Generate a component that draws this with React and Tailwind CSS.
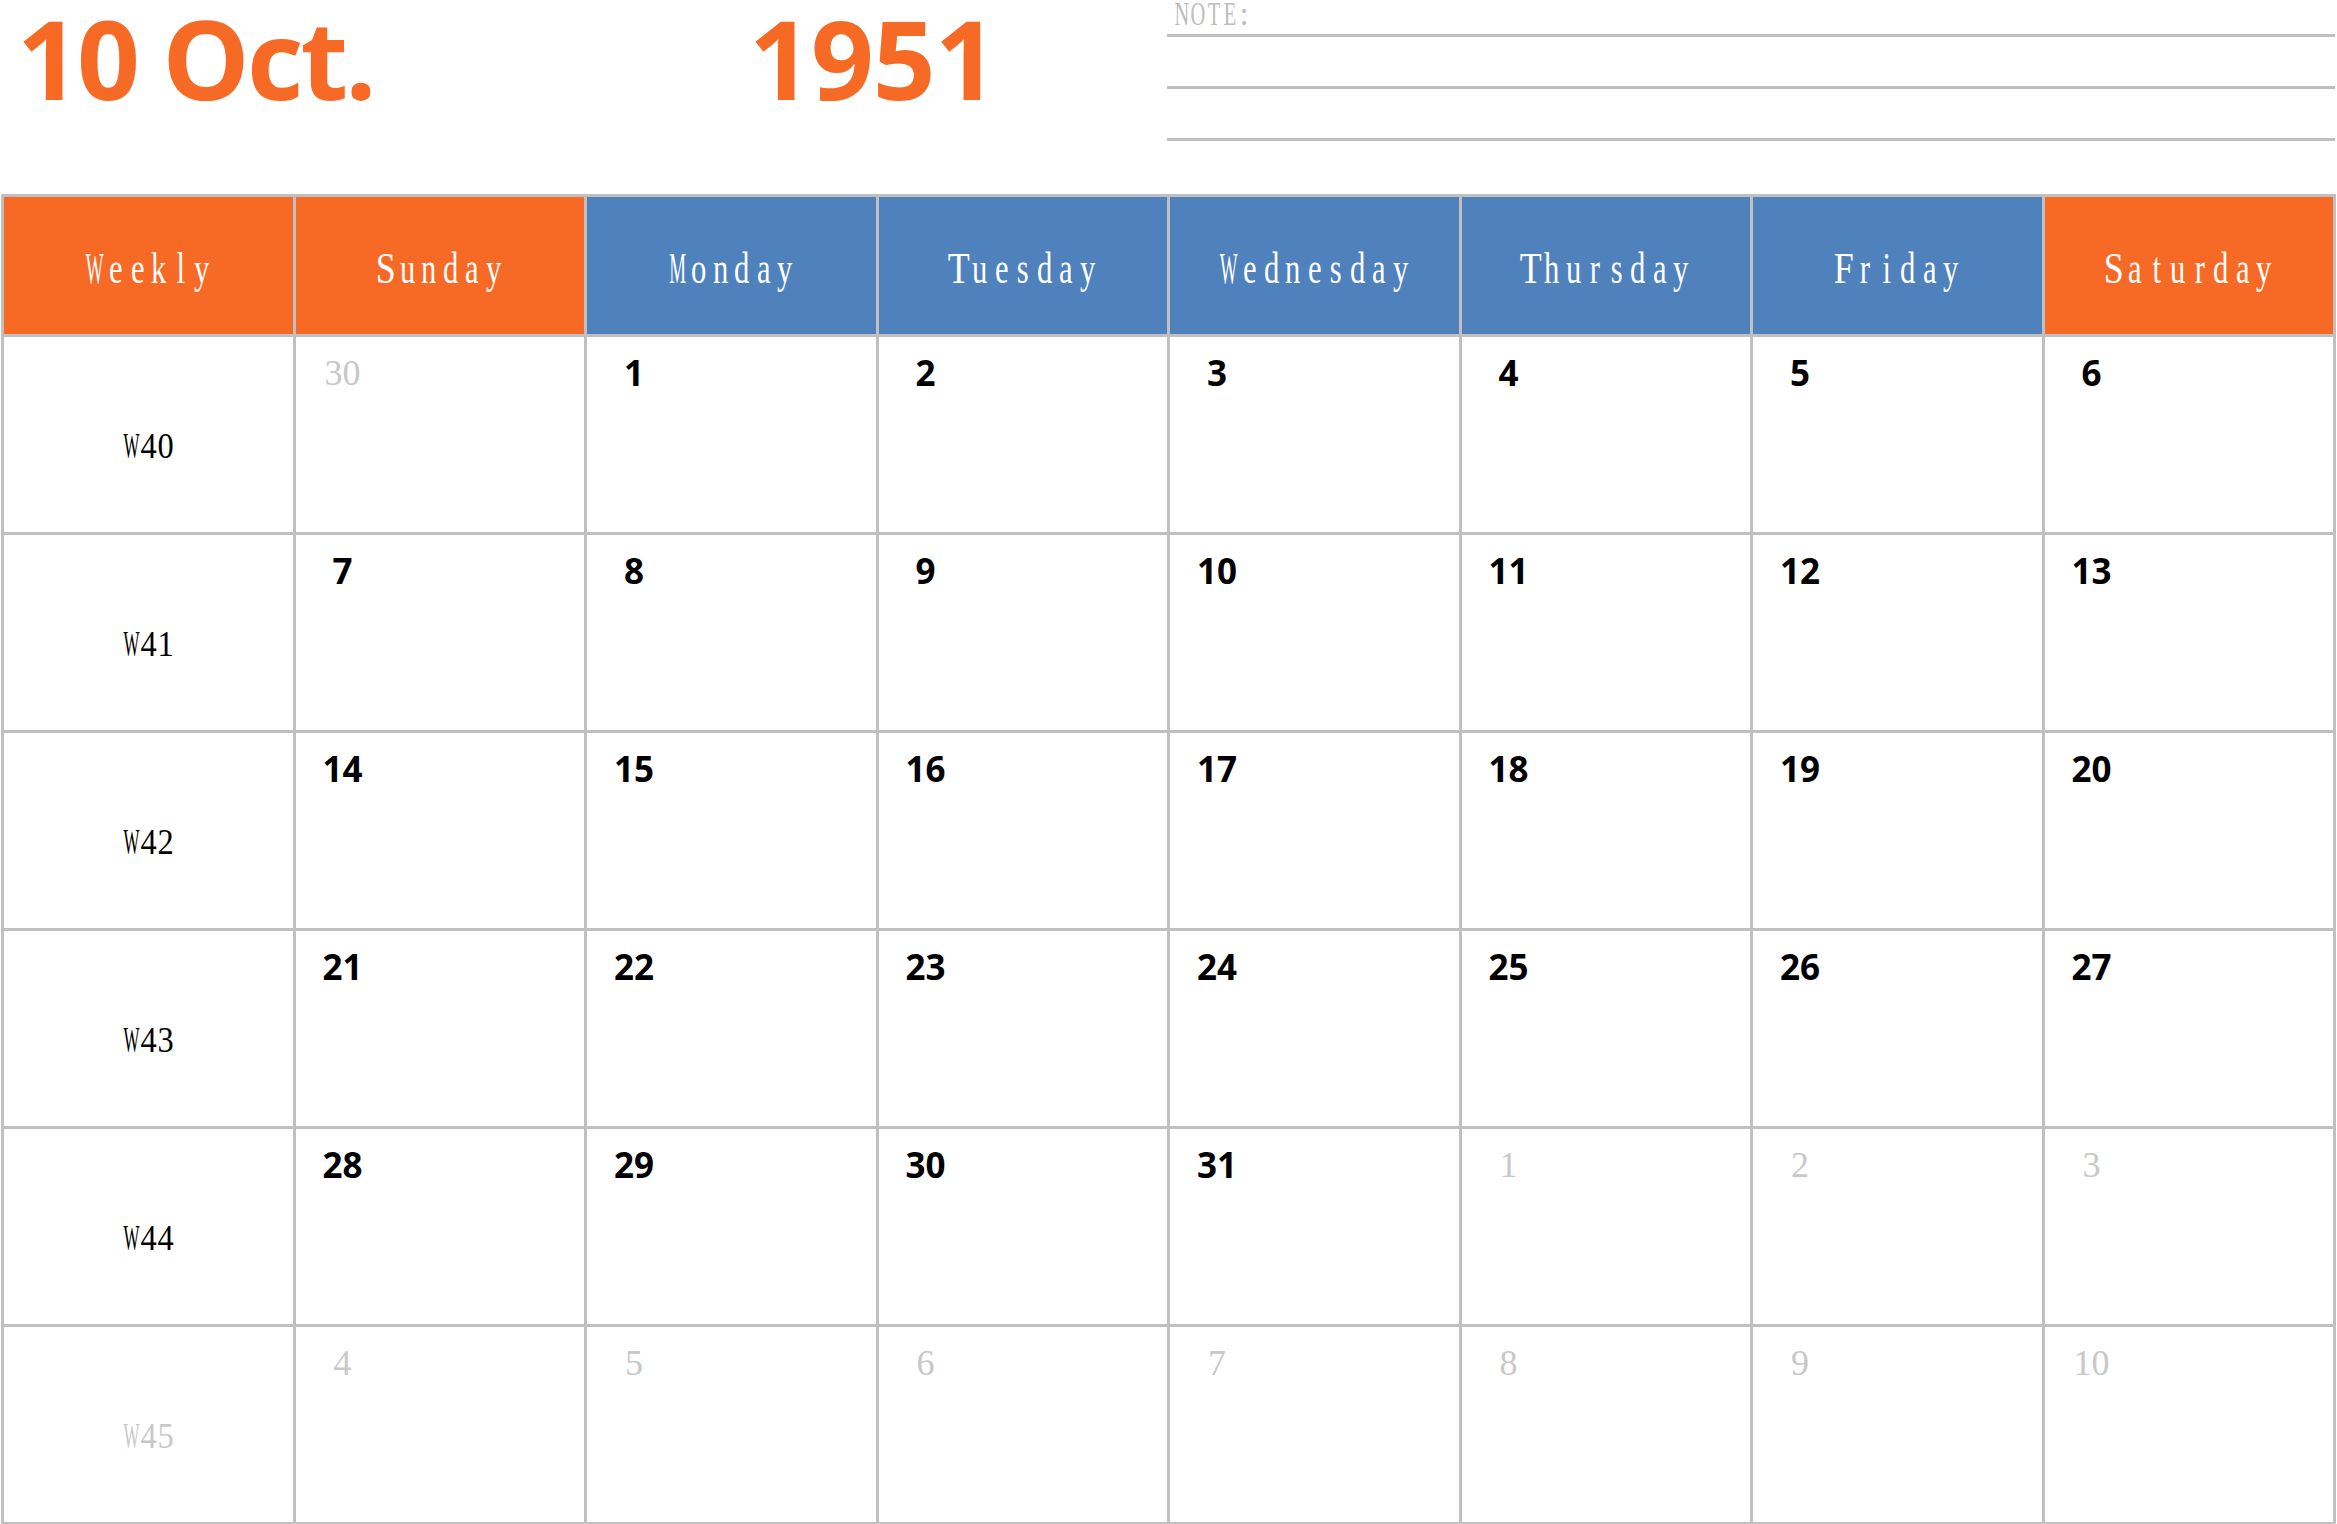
import React from "react";

const WIDE = "WMm";

function HeadText({ text }) {
  return (
    <span className="inline-flex">
      {text.split("").map((ch, i) => {
        let cls = "inline-flex justify-center w-[21.5px] scale-x-[0.68]";
        if (WIDE.includes(ch)) cls = "inline-flex justify-center w-[21.5px] scale-x-[0.42]";
        else if (ch >= "A" && ch <= "Z") cls = "inline-flex justify-center w-[21.5px] scale-x-[0.8]";
        return (
          <span key={i} className={cls}>
            {ch}
          </span>
        );
      })}
    </span>
  );
}

function WeekText({ text }) {
  return (
    <span className="inline-flex">
      {text.split("").map((ch, i) => {
        const cls = WIDE.includes(ch)
          ? "inline-flex justify-center w-[17px] scale-x-[0.47]"
          : "inline-flex justify-center w-[17px] scale-x-[0.9]";
        return (
          <span key={i} className={cls}>
            {ch}
          </span>
        );
      })}
    </span>
  );
}

function NoteText({ text }) {
  return (
    <span className="inline-flex">
      {text.split("").map((ch, i) => {
        const cls =
          ch === ":"
            ? "inline-flex justify-center w-[12px]"
            : "inline-flex justify-center w-[16px] scale-x-[0.62]";
        return (
          <span key={i} className={cls}>
            {ch}
          </span>
        );
      })}
    </span>
  );
}

const headers = [
  { t: "Weekly", c: "bg-[#F76A25]" },
  { t: "Sunday", c: "bg-[#F76A25]" },
  { t: "Monday", c: "bg-[#4F81BD]" },
  { t: "Tuesday", c: "bg-[#4F81BD]" },
  { t: "Wednesday", c: "bg-[#4F81BD]" },
  { t: "Thursday", c: "bg-[#4F81BD]" },
  { t: "Friday", c: "bg-[#4F81BD]" },
  { t: "Saturday", c: "bg-[#F76A25]" },
];

const weeks = [
  { w: "W40", cur: true, d: [[30, false], [1, true], [2, true], [3, true], [4, true], [5, true], [6, true]] },
  { w: "W41", cur: true, d: [[7, true], [8, true], [9, true], [10, true], [11, true], [12, true], [13, true]] },
  { w: "W42", cur: true, d: [[14, true], [15, true], [16, true], [17, true], [18, true], [19, true], [20, true]] },
  { w: "W43", cur: true, d: [[21, true], [22, true], [23, true], [24, true], [25, true], [26, true], [27, true]] },
  { w: "W44", cur: true, d: [[28, true], [29, true], [30, true], [31, true], [1, false], [2, false], [3, false]] },
  { w: "W45", cur: false, d: [[4, false], [5, false], [6, false], [7, false], [8, false], [9, false], [10, false]] },
];

export default function App() {
  return (
    <div className="w-[2337px] h-[1524px] bg-white overflow-hidden">
      {/* Top area */}
      <div className="h-[194px] flex">
        <div className="w-[1167px] flex items-start">
          <span className="ml-[17px] -mt-[18px] w-[732px] text-[110px] leading-[150px] tracking-[-3px] font-bold text-[#F76A25] font-['Open_Sans','Noto_Sans',sans-serif] whitespace-nowrap">
            10 Oct.
          </span>
          <span className="-mt-[18px] text-[110px] leading-[150px] tracking-[-1px] font-bold text-[#F76A25] font-['Open_Sans','Noto_Sans',sans-serif]">
            1951
          </span>
        </div>
        <div className="w-[1168px] flex flex-col">
          <div className="h-[34px] pl-[7px] text-[33px] leading-[28px] text-[#BDBDBD] font-['Liberation_Serif',serif]">
            <NoteText text="NOTE:" />
          </div>
          <div className="h-[3px] bg-[#BFBFBF]" />
          <div className="h-[49px]" />
          <div className="h-[3px] bg-[#BFBFBF]" />
          <div className="h-[49px]" />
          <div className="h-[3px] bg-[#BFBFBF]" />
        </div>
      </div>

      {/* Calendar table */}
      <div className="ml-[1px] w-[2335px] bg-[#C0C0C0] p-[3px] grid grid-cols-8 grid-rows-[137px_repeat(6,195px)] gap-[3px]">
        {headers.map((h) => (
          <div
            key={h.t}
            className={`${h.c} flex items-center justify-center pt-[5px] text-white text-[45px] leading-none font-['Liberation_Serif',serif]`}
          >
            <HeadText text={h.t} />
          </div>
        ))}
        {weeks.map((wk) => (
          <React.Fragment key={wk.w}>
            <div
              className={`bg-white flex items-center justify-center pt-[22px] text-[36px] leading-none font-['Liberation_Serif',serif] ${
                wk.cur ? "text-black" : "text-[#C8C8C8]"
              }`}
            >
              <WeekText text={wk.w} />
            </div>
            {wk.d.map(([n, cur], i) => (
              <div key={i} className="bg-white pt-[18px]">
                {cur ? (
                  <div className="ml-[22px] w-[50px] text-center text-[35px] leading-none font-bold text-black font-['Open_Sans','Noto_Sans',sans-serif]">
                    {n}
                  </div>
                ) : (
                  <div className="ml-[22px] w-[50px] text-center text-[36px] leading-none text-[#C8C8C8] font-['Liberation_Serif',serif]">
                    {n}
                  </div>
                )}
              </div>
            ))}
          </React.Fragment>
        ))}
      </div>
    </div>
  );
}
